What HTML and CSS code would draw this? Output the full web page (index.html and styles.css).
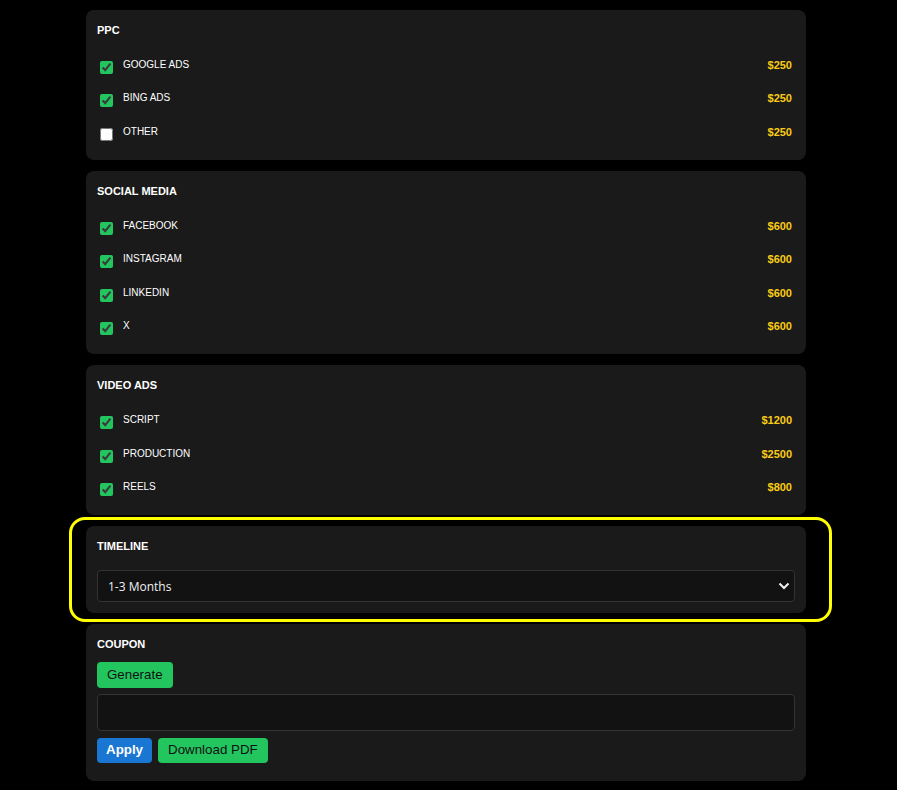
FILE: index.html
```html
<!DOCTYPE html>
<html lang="en">
<head>
  <meta charset="UTF-8">
  <meta name="viewport" content="width=device-width, initial-scale=1.0">
  <title>Campaign Builder</title>
  <link rel="stylesheet" href="styles.css">
</head>
<body>
  <div class="wrap">
    <div class="card">
      <h3>PPC</h3>
      <div class="item"><label><input type="checkbox" checked> <span>GOOGLE ADS</span></label><span class="price">$250</span></div>
      <div class="item"><label><input type="checkbox" checked> <span>BING ADS</span></label><span class="price">$250</span></div>
      <div class="item"><label><input type="checkbox"> <span>OTHER</span></label><span class="price">$250</span></div>
    </div>

    <div class="card">
      <h3>SOCIAL MEDIA</h3>
      <div class="item"><label><input type="checkbox" checked> <span>FACEBOOK</span></label><span class="price">$600</span></div>
      <div class="item"><label><input type="checkbox" checked> <span>INSTAGRAM</span></label><span class="price">$600</span></div>
      <div class="item"><label><input type="checkbox" checked> <span>LINKEDIN</span></label><span class="price">$600</span></div>
      <div class="item"><label><input type="checkbox" checked> <span>X</span></label><span class="price">$600</span></div>
    </div>

    <div class="card">
      <h3>VIDEO ADS</h3>
      <div class="item"><label><input type="checkbox" checked> <span>SCRIPT</span></label><span class="price">$1200</span></div>
      <div class="item"><label><input type="checkbox" checked> <span>PRODUCTION</span></label><span class="price">$2500</span></div>
      <div class="item"><label><input type="checkbox" checked> <span>REELS</span></label><span class="price">$800</span></div>
    </div>

    <div class="card card-timeline">
      <div class="highlight"></div>
      <h3>TIMELINE</h3>
      <div class="select-box">
        <select>
          <option>1-3 Months</option>
          <option>3-6 Months</option>
          <option>6-12 Months</option>
        </select>
        <svg class="chevron" width="12" height="8" viewBox="0 0 12 8"><path d="M1.5 1.5 L6 6 L10.5 1.5" fill="none" stroke="#f2f2f2" stroke-width="2"/></svg>
      </div>
    </div>

    <div class="card card-coupon">
      <h3>COUPON</h3>
      <button class="btn btn-green btn-gen">Generate</button>
      <input type="text" class="coupon-input">
      <div class="actions">
        <button class="btn btn-blue">Apply</button>
        <button class="btn btn-green">Download PDF</button>
      </div>
    </div>
  </div>
</body>
</html>
```

FILE: styles.css
```css
* {
  box-sizing: border-box;
  margin: 0;
  padding: 0;
}

body {
  background: #000;
  font-family: 'Liberation Sans', Arial, sans-serif;
  color: #fff;
}

.wrap {
  width: 720px;
  margin-left: 86px;
  padding-top: 10px;
  display: flex;
  flex-direction: column;
  gap: 11px;
}

.card {
  background: #1a1a1a;
  border-radius: 8px;
  padding: 14px 14px 1.8px 11px;
  position: relative;
}

.card h3 {
  font-size: 11px;
  line-height: 13px;
  font-weight: bold;
  margin-bottom: 21px;
}

.item {
  height: 33.4px;
  display: flex;
  justify-content: space-between;
  align-items: flex-start;
}

.item label {
  display: flex;
  align-items: flex-start;
  gap: 10px;
  font-size: 10px;
  line-height: 12px;
}

.item label span {
  padding-top: 1px;
}

.item input {
  width: 13px;
  height: 13px;
  margin: 3px 0 0 3px;
  accent-color: #22c55e;
}

.price {
  color: #facc15;
  font-weight: bold;
  font-size: 11px;
  line-height: 12px;
  margin-top: 1px;
}

.card-timeline {
  padding: 14px 11px 11px 11px;
}

.card-timeline h3 {
  margin-bottom: 17px;
}

.highlight {
  position: absolute;
  left: -17px;
  right: -26px;
  top: -9px;
  bottom: -9px;
  border: 3px solid #ffff00;
  border-radius: 16px;
  pointer-events: none;
}

.select-box {
  position: relative;
}

.select-box select {
  width: 100%;
  height: 32px;
  appearance: none;
  background: #121212;
  border: 1px solid #333;
  border-radius: 4px;
  color: #f0f0f0;
  font-family: 'Open Sans', 'Noto Sans', sans-serif;
  font-size: 12px;
  padding-left: 10px;
}

.chevron {
  position: absolute;
  right: 5px;
  top: 12px;
  pointer-events: none;
}

.card-coupon {
  padding: 14px 11px 18px 11px;
}

.card-coupon h3 {
  margin-bottom: 11px;
}

.btn {
  border: none;
  border-radius: 4px;
  font-family: 'Liberation Sans', Arial, sans-serif;
  font-size: 13.333px;
  line-height: 15px;
  padding: 4px 10px 6px;
  cursor: pointer;
}

.btn-green {
  background: #22c55e;
  color: #111;
}

.btn-blue {
  background: #1976d2;
  color: #fff;
  font-weight: bold;
  padding: 4px 9px 6px;
}

.btn-gen {
  display: block;
  height: 26px;
}

.coupon-input {
  display: block;
  width: 100%;
  height: 37px;
  margin: 6px 0 7px;
  background: #121212;
  border: 1px solid #333;
  border-radius: 4px;
  color: #fff;
}

.actions {
  display: flex;
  gap: 6px;
}
```
